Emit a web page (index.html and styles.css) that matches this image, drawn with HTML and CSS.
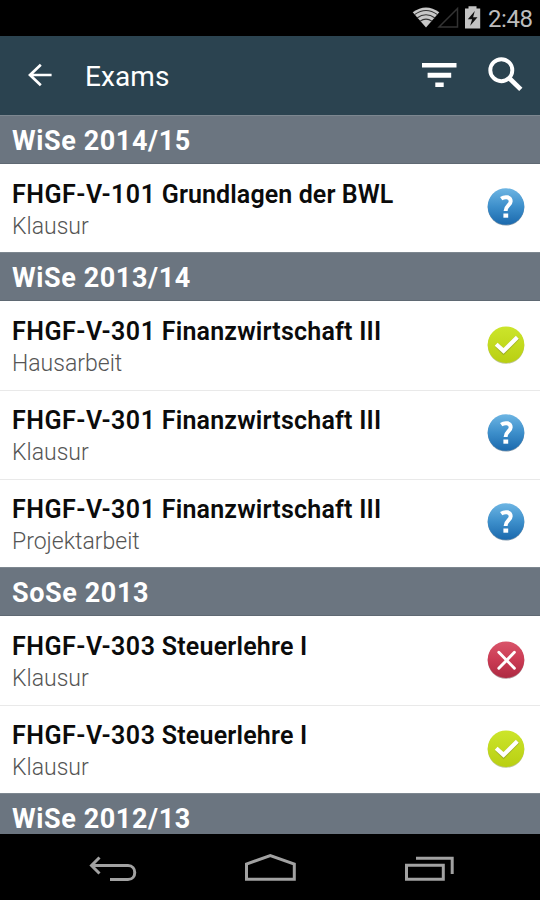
FILE: index.html
```
<!DOCTYPE html>
<html lang="de">
<head>
<meta charset="utf-8">
<title>Exams</title>
<link rel="stylesheet" href="styles.css">
</head>
<body>
<svg class="defs" width="0" height="0" aria-hidden="true">
  <defs>
    <linearGradient id="blue" x1="0" y1="0" x2="0" y2="1"><stop offset="0" stop-color="#6db5e3"/><stop offset=".5" stop-color="#3d8fcb"/><stop offset="1" stop-color="#1b69ad"/></linearGradient>
    <linearGradient id="green" x1="0" y1="0" x2="0" y2="1"><stop offset="0" stop-color="#cce52b"/><stop offset="1" stop-color="#b9cf12"/></linearGradient>
    <linearGradient id="red" x1="0" y1="0" x2="0" y2="1"><stop offset="0" stop-color="#d9556a"/><stop offset=".5" stop-color="#cb3b54"/><stop offset="1" stop-color="#ae2a42"/></linearGradient>
    <symbol id="check" viewBox="0 0 40 40">
      <circle cx="20" cy="21.5" r="18.3" fill="#8f9d4a" opacity=".6"/>
      <circle cx="20" cy="20.7" r="18.3" fill="url(#green)"/>
      <path d="M11 21.3l6.5 6.4L31.5 13.6" fill="none" stroke="#7f8c35" stroke-width="5" opacity=".5"/>
      <path d="M10.2 20.3l7.3 6.6L31.3 13.3" fill="none" stroke="#fff" stroke-width="4.2"/>
    </symbol>
    <symbol id="cross" viewBox="0 0 40 40">
      <circle cx="20" cy="21.5" r="18.3" fill="#78404b" opacity=".6"/>
      <circle cx="20" cy="20.7" r="18.3" fill="url(#red)"/>
      <path d="M12.8 13.3l15.6 16M28.4 13.3l-15.6 16" fill="none" stroke="#fff" stroke-width="2.9" stroke-linecap="round"/>
    </symbol>
    <symbol id="unknown" viewBox="0 0 40 40">
      <circle cx="20" cy="20.3" r="18.3" fill="#365a78" opacity=".6"/>
      <circle cx="20" cy="19.5" r="18.3" fill="url(#blue)"/>
      <path d="M15.2 11.7c3.4-2.4 9.5-2.2 9.5 2.5 0 4.2-5.1 4.4-5.1 9.7" fill="none" stroke="#fff" stroke-width="4"/>
      <path d="M17.4 26.5h4.8v4.2h-4.8z" fill="#fff"/>
    </symbol>
  </defs>
</svg>
<div class="screen">
  <div class="status">
    <svg width="128" height="36" viewBox="412 0 128 36">
      <path d="M412.7 12.3Q426 2.5 439.3 12.3L426 27.5Z" fill="#c8c8c8"/>
      <path d="M414.5 14.6Q426 6.3 437.5 14.6M417 18Q426 11.5 435 18M420 21.3Q426 17 432 21.3" fill="none" stroke="#333" stroke-width="1.1"/>
      <path d="M457.5 8.5V27H439Z" fill="none" stroke="#333" stroke-width="1.5"/>
      <path d="M465 8.5h3.5v-2.3h8v2.3h3.7V28.5H465z" fill="#c4c4c4"/>
      <path d="M474.8 11l-7 8.2h4.3l-1.9 6.5 7.3-8.4h-4.4z" fill="#111"/>
    </svg>
    <span class="clock">2:48</span>
  </div>
  <header class="toolbar">
    <svg class="back" width="24" height="24" viewBox="0 0 24 24"><path d="M12.8 1.8L2 12l10.8 10.2M2.2 12H23.6" fill="none" stroke="#fff" stroke-width="2.7"/></svg>
    <h1 class="title">Exams</h1>
    <svg class="filter" width="36" height="26" viewBox="0 0 36 26"><path d="M0 0h34.5v4.6H0zM5.6 9.7h23.6v5H5.6zM13.3 19.5h8.4v4.6h-8.4z" fill="#fff"/></svg>
    <svg class="search" width="36" height="36" viewBox="0 0 36 36"><circle cx="13.3" cy="13.2" r="11" fill="none" stroke="#fff" stroke-width="3.9"/><path d="M21.3 21.2l11.5 11.2" stroke="#fff" stroke-width="4.7"/></svg>
  </header>
  <main class="list">
    <h2 class="term">WiSe 2014/15</h2>
    <div class="exam"><div><p class="name"><span class="code">FHGF-V-101</span> Grundlagen der BWL</p><p class="kind">Klausur</p></div><svg class="mark"><use href="#unknown"/></svg></div>
    <h2 class="term">WiSe 2013/14</h2>
    <div class="exam"><div><p class="name"><span class="code">FHGF-V-301</span> <span class="wide">Finanzwirtschaft III</span></p><p class="kind">Hausarbeit</p></div><svg class="mark"><use href="#check"/></svg></div>
    <div class="exam"><div><p class="name"><span class="code">FHGF-V-301</span> <span class="wide">Finanzwirtschaft III</span></p><p class="kind">Klausur</p></div><svg class="mark"><use href="#unknown"/></svg></div>
    <div class="exam"><div><p class="name"><span class="code">FHGF-V-301</span> <span class="wide">Finanzwirtschaft III</span></p><p class="kind">Projektarbeit</p></div><svg class="mark"><use href="#unknown"/></svg></div>
    <h2 class="term">SoSe 2013</h2>
    <div class="exam"><div><p class="name"><span class="code">FHGF-V-303</span> <span class="wide">Steuerlehre I</span></p><p class="kind">Klausur</p></div><svg class="mark"><use href="#cross"/></svg></div>
    <div class="exam"><div><p class="name"><span class="code">FHGF-V-303</span> <span class="wide">Steuerlehre I</span></p><p class="kind">Klausur</p></div><svg class="mark"><use href="#check"/></svg></div>
    <h2 class="term">WiSe 2012/13</h2>
  </main>
  <nav class="nav">
    <svg width="540" height="66" viewBox="0 834 540 66" fill="none" stroke="#a2a2a2" stroke-width="3">
      <path d="M99.5 857.5L91.5 865.5l8 8M91.5 865.5H128c9 0 9 14 0 14H110"/>
      <path d="M246.5 879.3V864L270.3 855.5 294.3 864v15.3z"/>
      <path d="M406.5 865.3h36.8v14h-36.8zM416 858.3h36.2V874"/>
    </svg>
  </nav>
</div>
</body>
</html>
```
FILE: styles.css
```
* { box-sizing: border-box; }
body { margin: 0; background: #000; font-family: Roboto, sans-serif; }
h1, h2, p { margin: 0; white-space: nowrap; }
.defs { display: block; height: 0; }
.screen { width: 540px; height: 900px; display: flex; flex-direction: column; overflow: hidden; }
.status { height: 36px; flex: none; padding-left: 412px; display: grid; }
.status > * { grid-area: 1 / 1; }
.clock { color: #bdbdbd; font-size: 24px; line-height: 36px; padding: 1px 0 0 76px; letter-spacing: -0.4px; }
.toolbar { height: 78.8px; flex: none; display: flex; align-items: center; background: #2b4350; padding: 0 16px 0 28px; }
.back { flex: none; }
.title { flex: 1; margin-left: 33px; padding-top: 3px; color: #fff; font-size: 28px; font-weight: 400; line-height: 36px; letter-spacing: 0.1px; }
.filter { margin-top: 1px; }
.search { margin: 0 0 0 30px; }
.list { flex: 1; min-height: 0; overflow: hidden; background: #fff; }
.term { height: 49px; padding: 2px 12px 0; background: #6b7580; color: #fff; font-size: 27px; font-weight: 700; line-height: 47.4px; letter-spacing: 0.6px; border-top: 1px solid #7d8790; border-bottom: 1px solid #5f6973; }
.exam { height: 88.6px; padding: 15px 14px 0 12px; display: flex; justify-content: space-between; }
.exam + .exam { border-top: 1.5px solid #e9e9e9; padding-top: 14px; }
.name { color: #0b0b0b; font-size: 25px; font-weight: 600; line-height: 32px; letter-spacing: 0.1px; }
.code { letter-spacing: 0.5px; }
.wide { letter-spacing: 0.2px; }
.kind { color: #555; font-size: 23px; font-weight: 300; line-height: 32px; }
.mark { width: 40px; height: 40px; flex: none; margin-top: 8px; }
.nav { height: 66px; flex: none; background: #000; }
.nav svg { display: block; }
```
